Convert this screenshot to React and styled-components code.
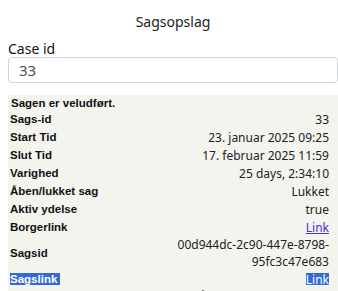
import React from "react";
import styled, { createGlobalStyle } from "styled-components";

const GlobalStyle = createGlobalStyle`
  body {
    margin: 0;
    background: #fff;
    font-family: "Noto Sans", "Open Sans", sans-serif;
    color: #212529;
  }
`;

const Page = styled.div`
  width: 330px;
  padding: 0 0 0 8px;
`;

const Title = styled.h1`
  margin: 0;
  padding-top: 12px;
  height: 28px;
  font-size: 14px;
  font-weight: 400;
  line-height: 20px;
  text-align: center;
  color: #222;
`;

const FieldLabel = styled.label`
  display: block;
  font-size: 14px;
  line-height: 17px;
  color: #111;
`;

const Input = styled.input`
  display: block;
  box-sizing: border-box;
  width: 100%;
  height: 26px;
  padding: 0 10px;
  border: 1px solid #ced4da;
  border-radius: 4px;
  font-family: "Noto Sans", sans-serif;
  font-size: 15px;
  color: #495057;
  outline: none;
`;

const Panel = styled.div`
  margin-top: 12px;
  padding: 0 0 4px 2px;
  background: #f4f4ef;
`;

const Status = styled.div`
  padding: 2px 0 0 1px;
  height: 13px;
  font-family: "Liberation Sans", Arial, sans-serif;
  font-size: 11.5px;
  font-weight: 700;
  line-height: 13px;
  color: #111;
`;

const Table = styled.div`
  display: grid;
  grid-template-columns: auto 1fr;
  width: 319px;
`;

const Label = styled.div`
  display: flex;
  align-items: center;
  min-height: 18px;
  font-family: "Liberation Sans", Arial, sans-serif;
  font-size: 11.5px;
  font-weight: 700;
  color: #111;
  span {
    line-height: 12px;
    background: ${(p) => (p.$selected ? "#3469d4" : "transparent")};
    color: ${(p) => (p.$selected ? "#fff" : "inherit")};
    padding-right: ${(p) => (p.$selected ? "3px" : "0")};
  }
`;

const Value = styled.div`
  display: flex;
  align-items: center;
  justify-content: flex-end;
  text-align: right;
  min-height: 18px;
  font-size: 12px;
  line-height: 17px;
  color: #222;
`;

const RowLink = styled.a`
  text-decoration: underline;
  line-height: 13px;
  background: ${(p) => (p.$selected ? "#3469d4" : "transparent")};
  color: ${(p) => (p.$selected ? "#fff" : "#4b2fd6")};
`;

const Wrapped = styled.span`
  white-space: pre-line;
`;

const rows = [
  { label: "Sags-id", value: "33" },
  { label: "Start Tid", value: "23. januar 2025 09:25" },
  { label: "Slut Tid", value: "17. februar 2025 11:59" },
  { label: "Varighed", value: "25 days, 2:34:10" },
  { label: "Åben/lukket sag", value: "Lukket" },
  { label: "Aktiv ydelse", value: "true" },
  { label: "Borgerlink", link: true },
  { label: "Sagsid", value: "00d944dc-2c90-447e-8798-\n95fc3c47e683", wrap: true },
  { label: "Sagslink", link: true, selected: true },
  {
    label: "Ydelse",
    value: "Kontakt åbnet i ydelse 25b2113\nafsluttet uden\nfejl",
    wrap: true,
  },
];

export default function App() {
  return (
    <>
      <GlobalStyle />
      <Page>
        <Title>Sagsopslag</Title>
        <FieldLabel htmlFor="caseid">Case id</FieldLabel>
        <Input id="caseid" defaultValue="33" />
        <Panel>
          <Status>Sagen er veludført.</Status>
          <Table>
            {rows.map((r) => (
              <React.Fragment key={r.label}>
                <Label $selected={r.selected}>
                  <span>{r.label}</span>
                </Label>
                <Value>
                  {r.link ? (
                    <RowLink href="#" $selected={r.selected}>
                      Link
                    </RowLink>
                  ) : r.wrap ? (
                    <Wrapped>{r.value}</Wrapped>
                  ) : (
                    r.value
                  )}
                </Value>
              </React.Fragment>
            ))}
          </Table>
        </Panel>
      </Page>
    </>
  );
}
